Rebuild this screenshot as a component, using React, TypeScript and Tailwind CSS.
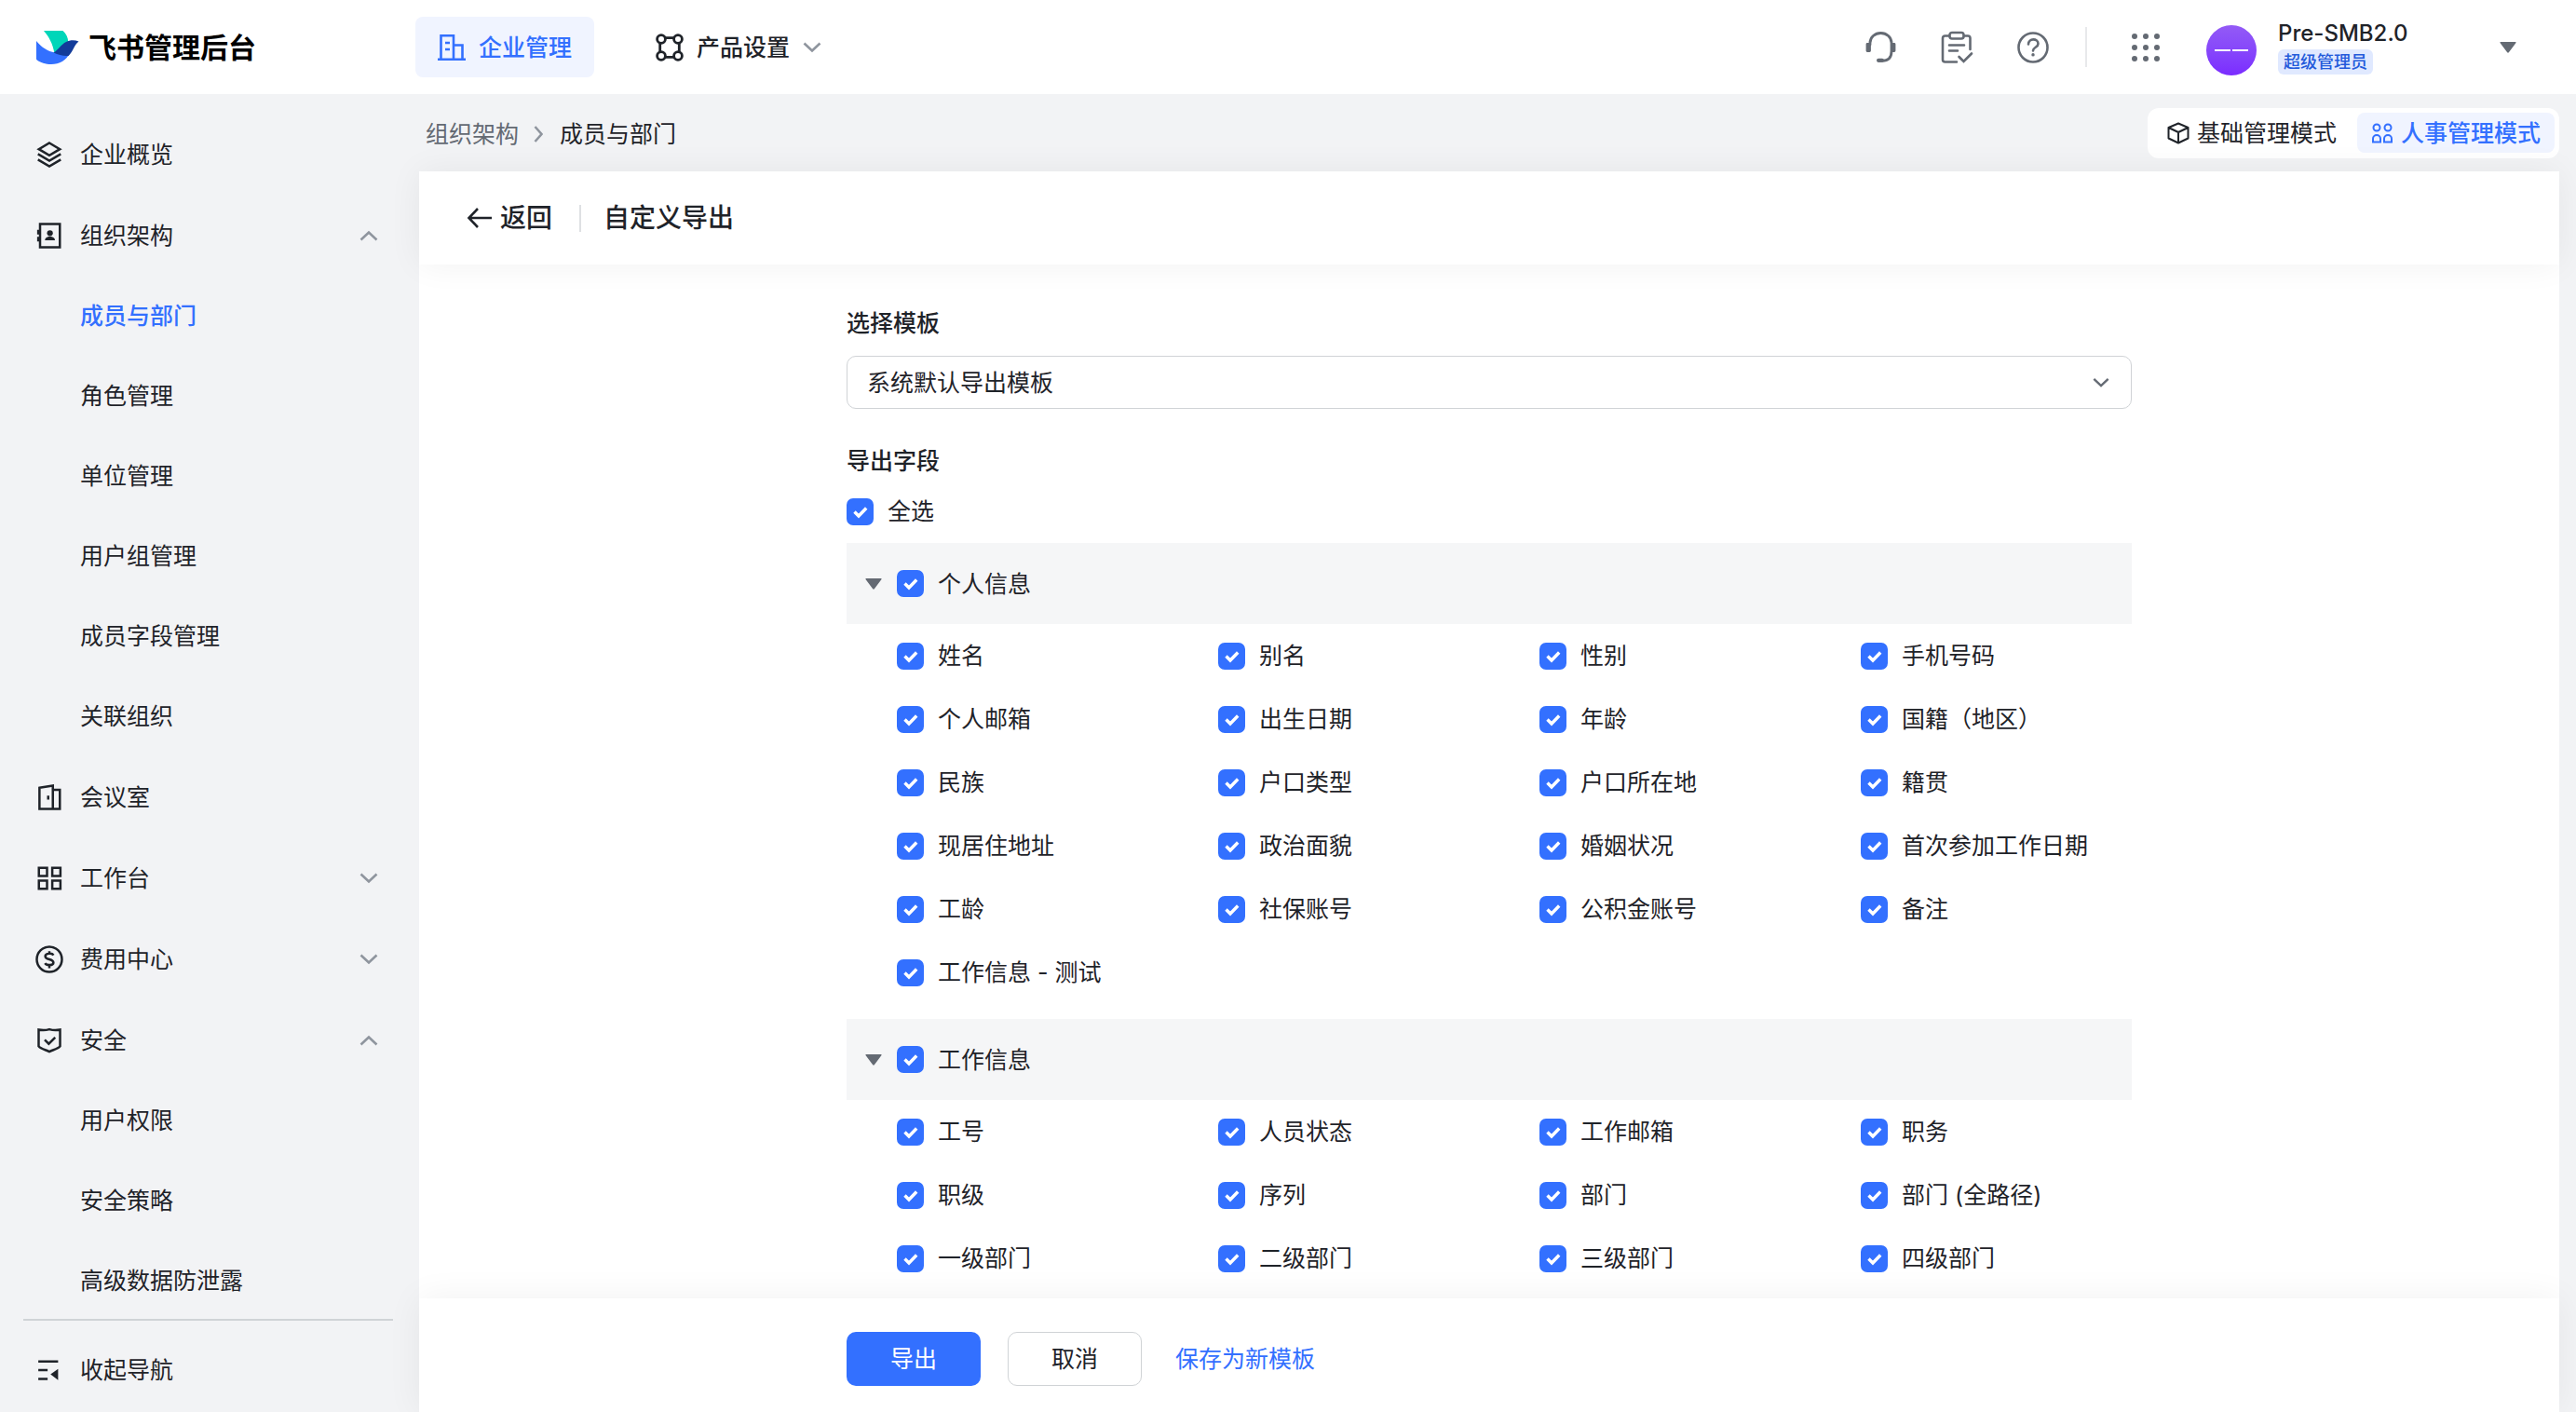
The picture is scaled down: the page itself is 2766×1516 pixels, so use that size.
import { useState } from 'react'
import type { ReactNode } from 'react'

interface NavEntry {
  label: string
  icon: ReactNode
  open?: boolean
  children?: string[]
}

interface FieldGroup {
  title: string
  fields: string[]
}

const stroke = {
  fill: 'none',
  stroke: 'currentColor',
  strokeWidth: 2,
} as const

const OverviewIcon = () => (
  <svg viewBox="0 0 24 24" className="size-[30px]" {...stroke}>
    <path d="M12 2 21 7.3 12 12.6 3 7.300Z" />
    <path d="M2.200 11.500 12 17.200l9.800-5.700M2.200 16.300 12 22l9.800-5.700" />
  </svg>
)

const OrgIcon = () => (
  <svg viewBox="0 0 24 24" className="size-[30px]" {...stroke}>
    <path d="M4 2h17v20H4zM2.500 7v4M2.500 13v4" />
    <circle cx="12.500" cy="9.800" r="2.500" fill="currentColor" stroke="none" />
    <path d="M8.200 16c0-4.200 8.600-4.200 8.600 0z" fill="currentColor" stroke="none" />
  </svg>
)

const RoomIcon = () => (
  <svg viewBox="0 0 24 24" className="size-[30px]" {...stroke}>
    <path d="M3.500 3.800 15 2v20H3.500zM15 5.500h6V22h-6M11 10.500v3.500" />
  </svg>
)

const WorkIcon = () => (
  <svg viewBox="0 0 24 24" className="size-[30px]" {...stroke}>
    <path d="M3 3h7v7H3zM14.500 3h7v7h-7zM3 14h7v7H3zM14.500 14h7v7h-7z" />
  </svg>
)

const CostIcon = () => (
  <svg viewBox="0 0 24 24" className="size-[30px]" {...stroke}>
    <circle cx="12" cy="12" r="10.800" />
    <path d="M15.500 8.500c-1-2-7-2-7 .8 0 3.400 7 2 7 5.400 0 2.800-6 2.800-7.200.6M12 5v2.500M12 17v2.500" />
  </svg>
)

const SafeIcon = () => (
  <svg viewBox="0 0 24 24" className="size-[30px]" {...stroke}>
    <path d="M2.800 2.800c3 .6 6 .6 9.200-.3 3.200.9 6.200.9 9.200.3V17c-2 2.500-6 3-9.200 4.700-3.200-1.700-7.200-2.200-9.200-4.700z" />
    <path d="m8 11.500 3.500 3.500 5.500-5.500" />
  </svg>
)

const CollapseIcon = () => (
  <svg viewBox="0 0 24 24" className="size-[30px]" {...stroke}>
    <path d="M2.500 4.500h17M2.500 12h8M2.500 19.500h8" />
    <path d="M13 15.500 19.500 11v9.500z" fill="currentColor" stroke="none" />
  </svg>
)

const Chevron = ({ className }: { className: string }) => (
  <svg viewBox="0 0 20 12" className={className} fill="none" stroke="currentColor" strokeWidth="2.600">
    <path d="m1.500 1.500 8.500 8 8.500-8" />
  </svg>
)

const Caret = () => (
  <svg viewBox="0 0 18 12" className="h-3 w-[18px] text-[#646a73]" fill="currentColor">
    <path d="M1 0h16q1 0 .5 1L10 11q-1 1.500-2 0L.5 1Q0 0 1 0z" />
  </svg>
)

const nav: NavEntry[] = [
  { label: '企业概览', icon: <OverviewIcon /> },
  {
    label: '组织架构',
    icon: <OrgIcon />,
    open: true,
    children: ['成员与部门', '角色管理', '单位管理', '用户组管理', '成员字段管理', '关联组织'],
  },
  { label: '会议室', icon: <RoomIcon /> },
  { label: '工作台', icon: <WorkIcon />, open: false },
  { label: '费用中心', icon: <CostIcon />, open: false },
  { label: '安全', icon: <SafeIcon />, open: true, children: ['用户权限', '安全策略', '高级数据防泄露'] },
]

const groups: FieldGroup[] = [
  {
    title: '个人信息',
    fields: [
      '姓名', '别名', '性别', '手机号码',
      '个人邮箱', '出生日期', '年龄', '国籍（地区）',
      '民族', '户口类型', '户口所在地', '籍贯',
      '现居住地址', '政治面貌', '婚姻状况', '首次参加工作日期',
      '工龄', '社保账号', '公积金账号', '备注',
      '工作信息 - 测试',
    ],
  },
  {
    title: '工作信息',
    fields: [
      '工号', '人员状态', '工作邮箱', '职务',
      '职级', '序列', '部门', '部门 (全路径)',
      '一级部门', '二级部门', '三级部门', '四级部门',
    ],
  },
]

const allFields = groups.flatMap(g => g.fields)

function Checkbox({ label, checked, onChange }: { label: string; checked: boolean; onChange: () => void }) {
  return (
    <label className="flex items-center gap-[15px] whitespace-nowrap">
      <span className="relative size-[29px] shrink-0">
        <input
          type="checkbox"
          checked={checked}
          onChange={onChange}
          className="block size-[29px] appearance-none rounded-[7px] border-2 border-[#8f959e] bg-white checked:border-[#3370ff] checked:bg-[#3370ff]"
        />
        {checked && (
          <svg viewBox="0 0 29 29" className="pointer-events-none absolute inset-0" fill="none" stroke="white" strokeWidth="3.400">
            <path d="m8.500 14.500 4.500 4.500 8.200-8.500" />
          </svg>
        )}
      </span>
      {label}
    </label>
  )
}

function TopBar() {
  return (
    <header className="flex h-[101px] shrink-0 items-center bg-white pr-16">
      <div className="flex w-[446px] shrink-0 items-center gap-[10px] pl-[39px]">
        <svg viewBox="0 0 46 36" className="h-9 w-[46px]">
          <path d="M0 11C6 18 12 22 20 23.500L36 24c-4 8-11 12-20 12C10 36 4 34 .8 31.500Q0 31 0 30z" fill="#3370ff" />
          <path d="M8 0h20.500C32 3 34 7 34.300 12L19.500 24C17.500 14 14 7 8 0z" fill="#00d6b9" />
          <path d="M45.500 11.500C40 16 40 22 34.500 27 29 27.500 24 26 18.500 23.500 23 21 27 14.500 32 12c4-2 9-2.300 13.500-.5z" fill="#133c9a" />
        </svg>
        <span className="text-[30px] font-bold text-black">飞书管理后台</span>
      </div>
      <nav className="flex items-center gap-[54px]">
        <a href="#" className="flex h-[65px] items-center gap-[14px] rounded-lg bg-[#f0f4ff] px-6 font-medium text-[#3370ff]">
          <svg viewBox="0 0 30 30" className="size-[30px]" fill="none" stroke="currentColor" strokeWidth="2.600">
            <path d="M0 27.700h30M3.500 27V2.300H17V27M17 12.500h9.500V27M8 10h5M8 17h5" />
          </svg>
          企业管理
        </a>
        <a href="#" className="flex h-[65px] items-center gap-[14px] px-3 font-medium text-[#1f2329]">
          <svg viewBox="0 0 30 30" className="size-[30px]" fill="none" stroke="currentColor" strokeWidth="2.800">
            <circle cx="6" cy="6" r="4.400" />
            <circle cx="24" cy="6" r="4.400" />
            <circle cx="6" cy="24" r="4.400" />
            <circle cx="24" cy="24" r="4.400" />
            <path d="M10 4.700h10M10 25.300h10M4.700 10v10M25.300 10v10" />
          </svg>
          产品设置
          <Chevron className="h-3 w-5 text-[#8f959e]" />
        </a>
      </nav>
      <div className="ml-auto flex items-center text-[#646a73]">
        <button type="button" aria-label="客服" className="mr-[46px]">
          <svg viewBox="0 0 36 36" className="size-9" fill="none" stroke="currentColor" strokeWidth="2.800">
            <path d="M7 15v-2a11.500 10.500 0 0 1 23 0v9c0 7-3.500 10.300-10 10.300h-4" strokeLinecap="round" />
            <path d="M4 14.500h2.500v7H4zM30.500 14.500H33v7h-2.500z" fill="currentColor" strokeLinejoin="round" />
            <path d="M16 31.800h4" strokeWidth="4" strokeLinecap="round" />
          </svg>
        </button>
        <button type="button" aria-label="任务" className="mr-[46px]">
          <svg viewBox="0 0 36 36" className="size-9" fill="none" stroke="currentColor" strokeWidth="2.600" strokeLinecap="round">
            <path d="M10 5.500H5.500Q3 5.500 3 8v23q0 2.500 2.500 2.500H18M26 5.500h4q2.500 0 2.500 2.500v12" />
            <rect x="10.500" y="2" width="15" height="6.500" rx="2.500" />
            <path d="M10 15.500h16M10 21.500h9M20.500 28l5 5 8.500-8.500" />
          </svg>
        </button>
        <button type="button" aria-label="帮助" className="mr-[38px]">
          <svg viewBox="0 0 36 36" className="size-9" fill="none" stroke="currentColor" strokeWidth="2.600" strokeLinecap="round">
            <circle cx="18" cy="18" r="15.500" />
            <path d="M13 14.500c0-7 10.500-6.500 10.500-.5 0 4-5.500 3.500-5.500 7.500" />
            <path d="M18 25.800v.1" strokeWidth="3.400" />
          </svg>
        </button>
        <span className="h-[43px] w-[2px] bg-[#e8e9eb]" />
        <button type="button" aria-label="应用" className="ml-[48px]">
          <svg viewBox="0 0 30 30" className="size-[30px]" fill="currentColor">
            {[3, 15, 27].map(y => [3, 15, 27].map(x => <circle key={`${x}-${y}`} cx={x} cy={y} r="3" />))}
          </svg>
        </button>
        <div className="mt-[7px] ml-[50px] flex size-[54px] items-center justify-center gap-[2px] rounded-full bg-gradient-to-b from-[#935af6] to-[#7b2bff]">
          <span className="h-[2px] w-[17px] bg-white" />
          <span className="h-[2px] w-[17px] bg-white" />
        </div>
        <div className="ml-[23px] flex w-[238px] flex-col items-start gap-[2px]">
          <span className="text-[24px] leading-[30px] font-medium text-[#1f2329]">Pre-SMB2.0</span>
          <span className="rounded-md bg-[#e0e9ff] px-[6px] text-[18px] leading-[27px] font-medium text-[#245bdb]">超级管理员</span>
        </div>
        <button type="button" aria-label="账号菜单">
          <Caret />
        </button>
      </div>
    </header>
  )
}

function Sidebar() {
  return (
    <aside className="flex w-[450px] shrink-0 flex-col">
      <nav className="min-h-0 flex-1 overflow-hidden pt-[21px]">
        {nav.map(entry => (
          <div key={entry.label}>
            <a href="#" className="flex h-[87px] items-center gap-[18px] pr-[44px] pl-[38px]">
              {entry.icon}
              {entry.label}
              {entry.open !== undefined && (
                <span className="ml-auto text-[#8f959e]">
                  <Chevron className={entry.open ? 'h-3 w-5 rotate-180' : 'h-3 w-5'} />
                </span>
              )}
            </a>
            {entry.children?.map(child => (
              <a
                key={child}
                href="#"
                className={
                  child === '成员与部门'
                    ? 'flex h-[86px] items-center pl-[86px] font-medium text-[#3370ff]'
                    : 'flex h-[86px] items-center pl-[86px]'
                }
              >
                {child}
              </a>
            ))}
          </div>
        ))}
      </nav>
      <div className="mr-7 ml-[25px] shrink-0 border-t-2 border-[#d0d3d6]">
        <button type="button" className="flex h-[98px] items-center gap-[18px] pt-2 pl-[13px]">
          <CollapseIcon />
          收起导航
        </button>
      </div>
    </aside>
  )
}

function ExportForm() {
  const [checked, setChecked] = useState<string[]>(allFields)

  const isAll = (fields: string[]) => fields.every(f => checked.includes(f))

  const toggle = (fields: string[]) => {
    setChecked(prev =>
      fields.every(f => prev.includes(f)) ? prev.filter(f => !fields.includes(f)) : [...prev, ...fields]
    )
  }

  return (
    <div className="mx-auto w-full max-w-[1380px] pt-[45px]">
      <label htmlFor="template" className="block leading-9 font-medium">选择模板</label>
      <div className="relative mt-[17px]">
        <select id="template" className="h-[57px] w-full appearance-none rounded-[10px] border border-[#d0d3d6] bg-white px-[21px] outline-none">
          <option>系统默认导出模板</option>
        </select>
        <span className="pointer-events-none absolute inset-y-0 right-6 flex items-center text-[#646a73]">
          <Chevron className="h-3 w-[18px]" />
        </span>
      </div>

      <h2 className="mt-[38px] leading-9 font-medium">导出字段</h2>
      <div className="mt-5 mb-[18px] flex h-8 items-center">
        <Checkbox label="全选" checked={isAll(allFields)} onChange={() => toggle(allFields)} />
      </div>

      {groups.map(group => (
        <section key={group.title} className="mb-4">
          <div className="flex h-[87px] items-center gap-4 bg-[#f5f6f7] pl-5">
            <button type="button" aria-label={`收起${group.title}`}>
              <Caret />
            </button>
            <Checkbox label={group.title} checked={isAll(group.fields)} onChange={() => toggle(group.fields)} />
          </div>
          <div className="grid grid-cols-4">
            {group.fields.map(field => (
              <div key={field} className="flex h-[68px] items-center pl-[54px]">
                <Checkbox label={field} checked={checked.includes(field)} onChange={() => toggle([field])} />
              </div>
            ))}
          </div>
        </section>
      ))}
    </div>
  )
}

export default function App() {
  return (
    <div className="flex h-screen flex-col overflow-hidden bg-[#f2f3f5] font-[Inter,'Noto_Sans_CJK_SC',sans-serif] text-[25px] leading-9 text-[#1f2329]">
      <TopBar />
      <div className="flex min-h-0 flex-1">
        <Sidebar />
        <main className="flex min-w-0 flex-1 flex-col pr-[18px]">
          <div className="flex h-[83px] shrink-0 items-center justify-between pl-[7px]">
            <div className="flex items-center gap-4 pt-[2px]">
              <a href="#" className="text-[#646a73]">组织架构</a>
              <svg viewBox="0 0 10 18" className="h-[18px] w-[10px] text-[#8f959e]" fill="none" stroke="currentColor" strokeWidth="2.600">
                <path d="m1.500 1 7 8-7 8" />
              </svg>
              <span className="ml-[2px]">成员与部门</span>
            </div>
            <div className="flex h-[54px] items-center rounded-xl bg-white p-[5px]">
              <button type="button" className="flex h-[43px] items-center gap-2 px-4">
                <svg viewBox="0 0 24 24" className="size-6" {...stroke}>
                  <path d="M12 1.500 22.500 6v11.500L12 22.500 1.500 17.500V6zM1.500 6 12 11l10.500-5M12 11v11.500" strokeLinejoin="round" />
                </svg>
                基础管理模式
              </button>
              <button type="button" className="ml-[6px] flex h-[43px] items-center gap-2 rounded-lg bg-[#f0f4ff] px-[15px] font-medium text-[#3370ff]">
                <svg viewBox="0 0 24 24" className="size-6" {...stroke}>
                  <circle cx="6" cy="6" r="3.500" />
                  <circle cx="18" cy="6" r="3.500" />
                  <path d="M2 21.500v-3.500a4 4 0 0 1 8 0v3.500zM14 21.500v-3.500a4 4 0 0 1 8 0v3.500z" />
                </svg>
                人事管理模式
              </button>
            </div>
          </div>

          <div className="flex min-h-0 flex-1 flex-col bg-white">
            <div className="relative z-10 flex h-[100px] shrink-0 items-center bg-white pl-[51px] text-[28px] font-medium shadow-[0_0_36px_rgba(0,0,0,0.06)]">
              <button type="button" className="flex items-center gap-2">
                <svg viewBox="0 0 28 24" className="h-6 w-7" fill="none" stroke="currentColor" strokeWidth="2.600">
                  <path d="M27 12H3M12 2 2.500 12l9.500 10" />
                </svg>
                返回
              </button>
              <span className="mr-6 ml-[29px] h-[29px] w-[2px] bg-[#dee0e3]" />
              <h1>自定义导出</h1>
            </div>

            <div className="min-h-0 flex-1 overflow-hidden">
              <ExportForm />
            </div>

            <div className="relative z-10 shrink-0 bg-white pt-9 pb-7 shadow-[0_0_36px_rgba(0,0,0,0.06)]">
              <div className="mx-auto flex w-full max-w-[1380px] items-center gap-[29px]">
                <button type="button" className="h-[58px] w-36 rounded-[10px] bg-[#3370ff] text-white">导出</button>
                <button type="button" className="h-[58px] w-36 rounded-[10px] border border-[#d0d3d6]">取消</button>
                <button type="button" className="px-[7px] text-[#3370ff]">保存为新模板</button>
              </div>
            </div>
          </div>
        </main>
      </div>
    </div>
  )
}
